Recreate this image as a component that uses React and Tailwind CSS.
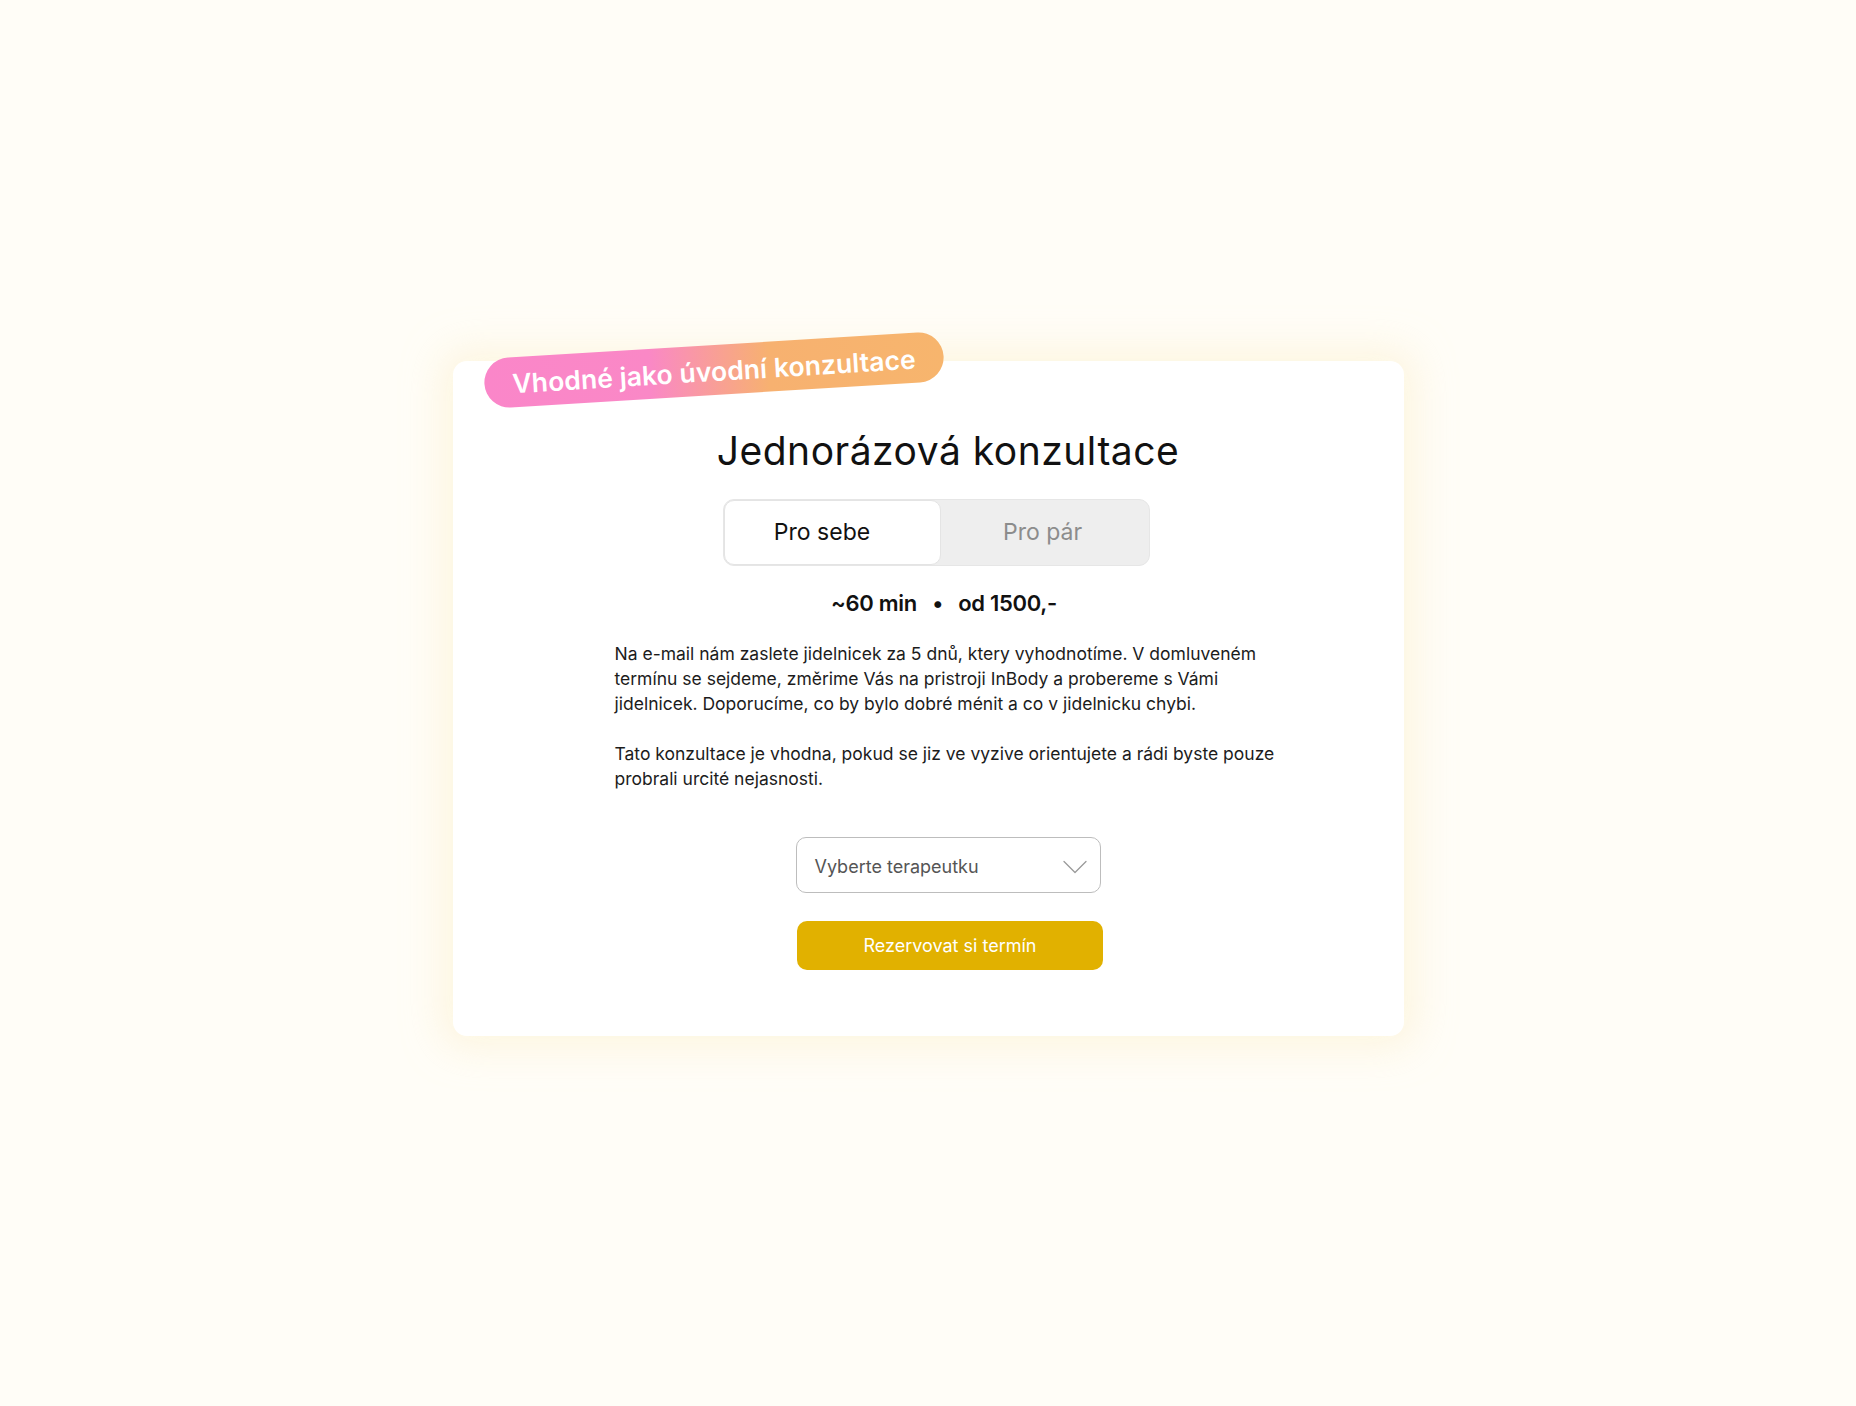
import React from "react";

function Chevron() {
  return (
    <svg width="24" height="14" viewBox="0 0 24 14" fill="none">
      <path d="M1 1.5 L12 12.5 L23 1.5" stroke="#9a9a9a" strokeWidth="1.3" strokeLinecap="round" strokeLinejoin="round" />
    </svg>
  );
}

export default function App() {
  return (
    <div
      className="min-h-screen w-full bg-[#fffdf7] pt-[361px] pb-[300px]"
      style={{ fontFamily: "Inter, 'Noto Sans', Arial, sans-serif" }}
    >
      <div className="relative mx-auto w-[951px] rounded-[14px] bg-white shadow-[0_0_36px_12px_rgba(252,240,205,0.55)]">
        <div
          className="absolute left-[31px] top-[-16px] flex h-[50px] w-[460px] -rotate-[3.5deg] items-center justify-center rounded-full pt-[4px] text-[26.5px] font-semibold tracking-[0.1px] text-white"
          style={{ background: "linear-gradient(90deg, #fa86c9 0%, #fa88c6 36%, #f7b170 62%, #f7b56d 100%)" }}
        >
          Vhodné jako úvodní konzultace
        </div>

        <div className="flex flex-col items-center pl-[40px] pt-[68px] pb-[66px]">
          <h1 className="text-[39px] font-normal leading-[44px] tracking-[0.5px] text-[#111]">
            Jednorázová konzultace
          </h1>

          <div className="mr-[24px] mt-[26px] flex h-[67px] w-[427px] rounded-[11px] border border-[#e6e6e6] bg-[#eeeeee]">
            <div className="flex h-full w-[217px] items-center justify-center rounded-[10px] border border-[#e4e4e4] bg-white pr-[20px] text-[23px] text-[#111]">
              Pro sebe
            </div>
            <div className="flex h-full flex-1 items-center justify-center pr-[4px] text-[23px] text-[#8c8c8c]">
              Pro pár
            </div>
          </div>

          <div className="mr-[8px] mt-[23px] text-[22px] font-semibold leading-[28px] tracking-[-0.3px] text-[#111]">
            ~60 min <span className="mx-[10px]">•</span> od 1500,-
          </div>

          <div className="ml-[122px] mt-[24px] self-start text-[17.5px] leading-[25px] text-[#1c1c1c]">
            <p className="whitespace-nowrap">
              Na e-mail nám zaslete jidelnicek za 5 dnů, ktery vyhodnotíme. V domluveném
              <br />
              termínu se sejdeme, změrime Vás na pristroji InBody a probereme s Vámi
              <br />
              jidelnicek. Doporucíme, co by bylo dobré ménit a co v jidelnicku chybi.
            </p>
            <p className="mt-[25px] whitespace-nowrap">
              Tato konzultace je vhodna, pokud se jiz ve vyzive orientujete a rádi byste pouze
              <br />
              probrali urcité nejasnosti.
            </p>
          </div>

          <div className="mt-[46px] flex h-[56px] w-[305px] items-center justify-between rounded-[10px] border border-[#bdbdbd] bg-white pl-[18px] pr-[13px] pt-[3px] text-[18px] text-[#555]">
            <span>Vyberte terapeutku</span>
            <Chevron />
          </div>

          <button className="ml-[4px] mt-[28px] flex h-[49px] w-[306px] items-center justify-center rounded-[10px] bg-[#e1b100] text-[18px] text-white">
            Rezervovat si termín
          </button>
        </div>
      </div>
    </div>
  );
}
